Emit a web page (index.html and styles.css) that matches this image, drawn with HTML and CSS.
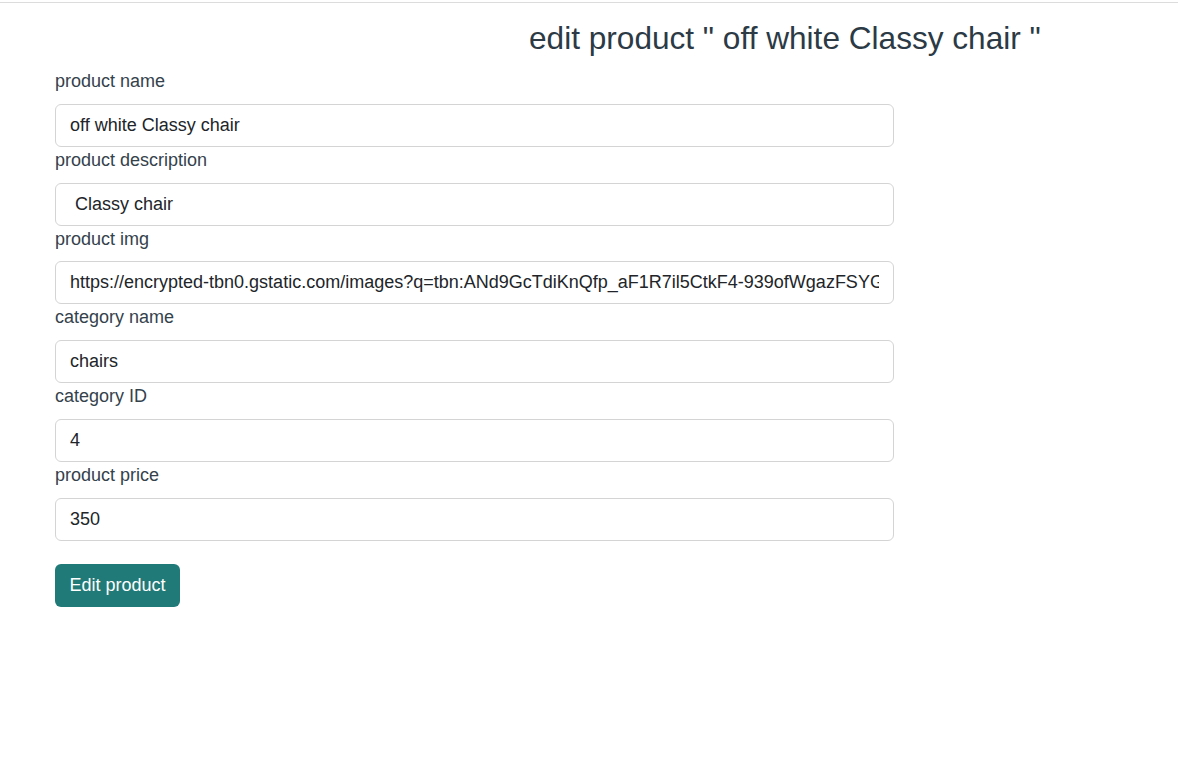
FILE: index.html
```html
<!DOCTYPE html>
<html lang="en">
<head>
<meta charset="utf-8">
<title>Edit product</title>
<link rel="stylesheet" href="styles.css">
</head>
<body>
<div class="topbar"></div>
<main class="page">
  <h2 class="title">edit product " off white Classy chair "</h2>
  <form class="form">
    <div class="field">
      <label class="label">product name</label>
      <input class="control" type="text" value="off white Classy chair">
    </div>
    <div class="field">
      <label class="label">product description</label>
      <input class="control" type="text" value=" Classy chair">
    </div>
    <div class="field">
      <label class="label">product img</label>
      <input class="control" type="text" value="https://encrypted-tbn0.gstatic.com/images?q=tbn:ANd9GcTdiKnQfp_aF1R7il5CtkF4-939ofWgazFSYG8">
    </div>
    <div class="field">
      <label class="label">category name</label>
      <input class="control" type="text" value="chairs">
    </div>
    <div class="field">
      <label class="label">category ID</label>
      <input class="control" type="text" value="4">
    </div>
    <div class="field">
      <label class="label">product price</label>
      <input class="control" type="text" value="350">
    </div>
    <button class="btn" type="button">Edit product</button>
  </form>
</main>
</body>
</html>
```

FILE: styles.css
```css
* { box-sizing: border-box; }
html, body { margin: 0; padding: 0; background: #fff; }
body {
  font-family: "Liberation Sans", Arial, sans-serif;
  color: #212529;
  font-size: 18px;
  line-height: 1.5;
}
.topbar {
  margin-top: 2px;
  height: 1px;
  background: #dcdcdc;
}
.page {
  padding: 0 55px;
}
.title {
  margin: 17px 0 10px 474px;
  font-size: 31.6px;
  font-weight: 400;
  line-height: 1.2;
  color: #2b3a45;
}
.form {
  width: 839px;
  display: flex;
  flex-direction: column;
}
.field {
  display: flex;
  flex-direction: column;
}
.label {
  display: block;
  color: #34424c;
  margin: 0 0 9px;
  line-height: 26.8px;
}
.control {
  display: block;
  width: 100%;
  height: 43px;
  padding: 6px 14px;
  font-family: inherit;
  font-size: 18px;
  color: #212529;
  background: #fff;
  border: 1px solid #d4d4d4;
  border-radius: 6px;
  outline: none;
}
.btn {
  align-self: flex-start;
  margin-top: 23px;
  height: 43px;
  padding: 0 14.5px;
  font-family: inherit;
  font-size: 18px;
  color: #fff;
  background: #1f7a78;
  border: none;
  border-radius: 6px;
}
```
